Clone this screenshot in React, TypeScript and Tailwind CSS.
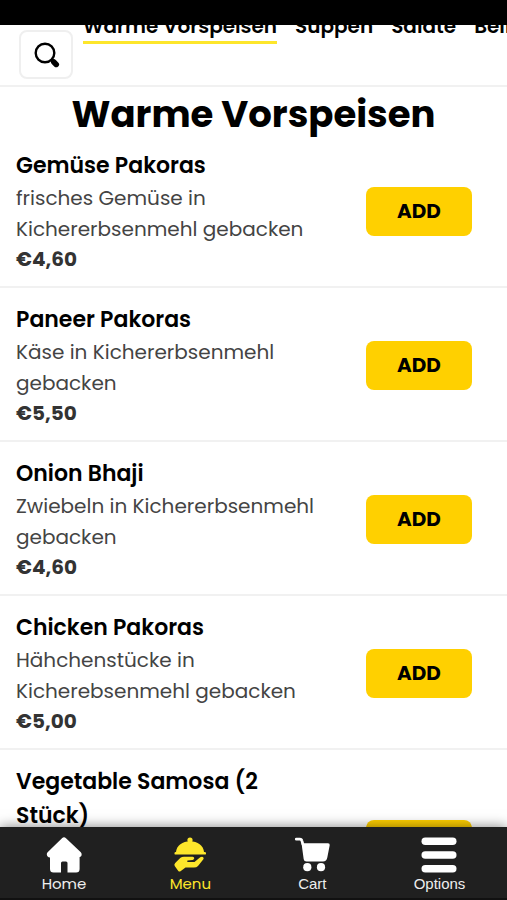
type Dish = { name: string; description?: string; price?: string };

const categories = ["Warme Vorspeisen", "Suppen", "Salate", "Beilagen"];

const dishes: Dish[] = [
  { name: "Gemüse Pakoras", description: "frisches Gemüse in Kichererbsenmehl gebacken", price: "€4,60" },
  { name: "Paneer Pakoras", description: "Käse in Kichererbsenmehl gebacken", price: "€5,50" },
  { name: "Onion Bhaji", description: "Zwiebeln in Kichererbsenmehl gebacken", price: "€4,60" },
  { name: "Chicken Pakoras", description: "Hähchenstücke in Kicherebsenmehl gebacken", price: "€5,00" },
  { name: "Vegetable Samosa (2 Stück)" },
];

function SearchIcon() {
  return (
    <svg viewBox="0 0 28 28" className="size-7" fill="none" stroke="#000" aria-hidden="true">
      <circle cx="13" cy="12" r="9.300" strokeWidth="2.400" />
      <path d="M19.500 18.400l2.500 2.400" strokeWidth="3" />
      <path d="M21.800 21l2.400 2.400" strokeWidth="5.600" strokeLinecap="round" />
    </svg>
  );
}

function HomeIcon() {
  return (
    <svg viewBox="0 0 36 36" className="size-9" fill="#fff" aria-hidden="true">
      <path d="M16 1.200a3 3 0 0 1 4 0L34.800 15.300c1.600 1.700.8 4.400-1.200 4.600V32a3.500 3.500 0 0 1-3.500 3.500H21.500V26a1.500 1.500 0 0 0-1.500-1.500H16.500a1.500 1.500 0 0 0-1.500 1.500v9.500H7.500A3.500 3.500 0 0 1 4 32V20.500C1.200 20.500-.2 17.300 1.600 15.300Z" />
    </svg>
  );
}

function MenuIcon() {
  return (
    <svg viewBox="0 0 36 36" className="size-9" fill="#fde62b" aria-hidden="true">
      <circle cx="18" cy="3" r="2.600" />
      <path d="M4 15C4.500 8.500 10.500 4.300 18 4.300S31.500 8.500 32 15Z" />
      <rect x="2.500" y="15" width="31.500" height="2.600" rx="1.200" />
      <path d="M3.200 26 8.500 20.800Q9.800 19.700 12 19.700H20.500C22.800 19.700 22.800 22.600 20.500 22.900L15.500 23.600C14.800 24.800 15.500 25.200 16.700 25.100H22.500L28.200 20.200C30.300 18.700 32.800 20.400 31.200 22.600L26 28.900Q24.500 30.500 22 30.500H13.500L8.500 34.300Q7.300 35 6.300 34L2.700 29Q1.800 27.500 3.200 26Z" />
    </svg>
  );
}

function CartIcon() {
  return (
    <svg viewBox="0 0 36 36" className="size-9" fill="#fff" aria-hidden="true">
      <path d="M2.300 2.200H5.800Q7.600 2.200 8 4L8.800 7" fill="none" stroke="#fff" strokeWidth="2.800" strokeLinecap="round" />
      <path d="M7.500 6.300H34Q36 6.300 35.700 8.200L33.300 20.500Q32.600 24.500 29 24.500H12.500Q10 24.500 9.700 22.300Z" />
      <circle cx="13.300" cy="30.200" r="4.100" />
      <circle cx="27" cy="30.200" r="4.100" />
    </svg>
  );
}

function OptionsIcon() {
  return (
    <svg viewBox="0 0 36 36" className="size-9" fill="#fff" aria-hidden="true">
      <rect x="0.500" y="0.500" width="35" height="7.500" rx="3.750" />
      <rect x="0.500" y="14.200" width="35" height="7.500" rx="3.750" />
      <rect x="0.500" y="28" width="35" height="7.500" rx="3.750" />
    </svg>
  );
}

function DishRow({ dish }: { dish: Dish }) {
  return (
    <li className="flex items-center justify-between gap-10 border-b-2 border-[#f1f1f1] pt-[2px] pr-[35px] pl-4">
      <div className="flex-1 py-[13px]">
        <h2 className="text-[22px] leading-[34px] font-semibold text-black">{dish.name}</h2>
        <p className="min-h-[62px] text-[20px] leading-[31px] text-[#444]">{dish.description}</p>
        <p className="min-h-7 text-[20px] leading-7 font-bold text-[#333]">{dish.price}</p>
      </div>
      <button
        type="button"
        aria-label={`ADD ${dish.name}`}
        className="h-[49px] w-[106px] shrink-0 rounded-lg bg-[#ffd000] text-[20px] font-bold text-black"
      >
        ADD
      </button>
    </li>
  );
}

export default function App() {
  return (
    <div className="flex h-screen flex-col overflow-hidden bg-white font-['Poppins','Inter',sans-serif]">
      <div className="h-[25px] shrink-0 bg-black" />
      <header className="flex shrink-0 items-start gap-[10px] overflow-hidden border-b-2 border-[#f1f1f1] pl-[19px]">
        <button
          type="button"
          aria-label="Suche"
          className="mt-[5px] mb-[6px] flex h-[49px] w-[54px] shrink-0 items-center justify-center rounded-lg border-2 border-[#efefef] bg-white"
        >
          <SearchIcon />
        </button>
        <nav className="-mt-[14px] flex min-w-0 flex-1 gap-[18px] overflow-hidden text-[20px] leading-[30px] font-semibold whitespace-nowrap">
          {categories.map((category, index) => (
            <a
              key={category}
              href="#menu"
              className={
                index === 0
                  ? "shrink-0 border-b-[3px] border-[#fde62b]"
                  : "shrink-0 border-b-[3px] border-transparent"
              }
            >
              {category}
            </a>
          ))}
        </nav>
      </header>

      <main id="menu" className="min-h-0 flex-1 overflow-hidden">
        <h1 className="pt-2 text-center text-[37px] leading-[39px] font-bold">Warme Vorspeisen</h1>
        <ul>
          {dishes.map((dish) => (
            <DishRow key={dish.name} dish={dish} />
          ))}
        </ul>
      </main>

      <nav className="z-10 flex h-[73px] shrink-0 justify-around border-b-2 border-[#111] bg-[#202020] pt-[10px] text-[15px] leading-5 text-[#eee] shadow-[0_0_12px_rgba(0,0,0,0.5)]">
        <a href="#home" className="flex flex-col items-center gap-[1px]">
          <HomeIcon />
          Home
        </a>
        <a href="#menu" className="flex flex-col items-center gap-[1px] text-[#fde62b]">
          <MenuIcon />
          Menu
        </a>
        <a href="#cart" className="flex flex-col items-center gap-[1px] font-['Liberation_Sans',sans-serif]">
          <CartIcon />
          Cart
        </a>
        <a href="#options" className="flex flex-col items-center gap-[1px] font-['Liberation_Sans',sans-serif]">
          <OptionsIcon />
          Options
        </a>
      </nav>
    </div>
  );
}
